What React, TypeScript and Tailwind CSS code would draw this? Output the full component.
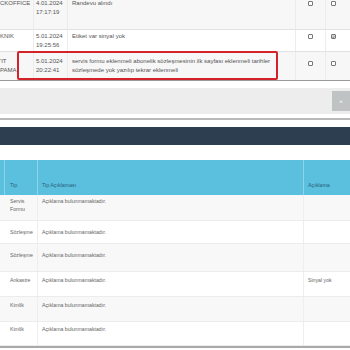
import React from 'react';

type TopRow = { who: string[]; date: string; time: string; note: string[]; a: boolean; b: boolean; bg: string; h: string; pt: string };

const topRows: TopRow[] = [
  { who: ['CKOFFICE'], date: '4.01.2024', time: '17:17:19', note: ['Randevu alındı'], a: false, b: false, bg: 'bg-[#f7f7f7]', h: 'h-[29px]', pt: 'pt-0' },
  { who: ['KNIK'], date: '5.01.2024', time: '19:25:56', note: ['Etiket var sinyal yok'], a: false, b: true, bg: 'bg-white', h: 'h-[22px]', pt: 'pt-[2px]' },
  {
    who: ["'IT", 'PAMA'],
    date: '5.01.2024',
    time: '20:22:41',
    note: [
      'servis formu eklenmeli abonelik sözleşmesinin ilk sayfası eklenmeli tarihler',
      'sözleşmede yok yazılıp tekrar eklenmeli',
    ],
    a: false,
    b: false,
    bg: 'bg-[#f7f7f7]',
    h: 'h-[29px]',
    pt: 'pt-[5px]',
  },
];

const bottomRows = [
  { tip: ['Servis', 'Formu'], desc: 'Açıklama bulunmamaktadır.', note: '', h: 'h-[26px]', pt: 'pt-[2px]' },
  { tip: ['Sözleşme'], desc: 'Açıklama bulunmamaktadır.', note: '', h: 'h-[23px]', pt: 'pt-[7px]' },
  { tip: ['Sözleşme'], desc: 'Açıklama bulunmamaktadır.', note: '', h: 'h-[28px]', pt: 'pt-[7px]' },
  { tip: ['Ankastre'], desc: 'Açıklama bulunmamaktadır.', note: 'Sinyal yok', h: 'h-[25px]', pt: 'pt-[4px]' },
  { tip: ['Kimlik'], desc: 'Açıklama bulunmamaktadır.', note: '', h: 'h-[25px]', pt: 'pt-[4px]' },
  { tip: ['Kimlik'], desc: 'Açıklama bulunmamaktadır.', note: '', h: 'h-[24px]', pt: 'pt-[3px]' },
];

function Box({ checked }: { checked: boolean }) {
  return (
    <div
      className={`w-[5px] h-[5px] rounded-[1px] border border-[#777] flex items-center justify-center ${
        checked ? 'bg-[#d5d5d5]' : 'bg-white'
      }`}
    >
      {checked && (
        <svg width="4" height="4" viewBox="0 0 4 4">
          <path d="M0.6 2 L1.6 3 L3.4 0.8" stroke="#555" strokeWidth="0.8" fill="none" />
        </svg>
      )}
    </div>
  );
}

export default function App() {
  return (
    <div className="w-[350px] h-[350px] overflow-hidden bg-white relative font-['Liberation_Sans',Arial,sans-serif] text-[#555] text-[6px] leading-[9px]">
      {/* Log table */}
      <div className="relative border-b border-[#9a9a9a]">
        {topRows.map((r, i) => (
          <div
            key={i}
            className={`grid grid-cols-[33px_34px_228px_30px_25px] ${r.bg} ${r.h} ${i > 0 ? 'border-t border-[#e2e2e2]' : ''}`}
          >
            <div className={`${r.pt} ${i === 0 ? '-mt-[1px]' : ''} whitespace-nowrap overflow-hidden`}>
              {r.who.map((w) => (
                <div key={w}>{w}</div>
              ))}
            </div>
            <div className={`${r.pt} ${i === 0 ? '-mt-[1px]' : ''} pl-[2px] border-l border-[#ececec]`}>
              <div>{r.date}</div>
              <div>{r.time}</div>
            </div>
            <div className={`${r.pt} ${i === 0 ? '-mt-[1px]' : ''} pl-[4px] border-l border-[#ececec] whitespace-nowrap`}>
              {r.note.map((n) => (
                <div key={n}>{n}</div>
              ))}
            </div>
            <div className={`${i === 0 ? 'pt-[1px]' : 'pt-[4px]'} flex justify-center border-l border-[#ececec]`}>
              <div className={i === 2 ? 'mt-[5px]' : ''}>
                <Box checked={r.a} />
              </div>
            </div>
            <div className={`${i === 0 ? 'pt-[1px]' : 'pt-[4px]'} flex justify-start pl-[5px] border-l border-[#ececec]`}>
              <div className={i === 2 ? 'mt-[5px]' : ''}>
                <Box checked={r.b} />
              </div>
            </div>
          </div>
        ))}
        {/* highlight */}
        <div className="absolute left-[17px] top-[51px] w-[261px] h-[29px] border-2 border-[#d32229] rounded-[2px]" />
      </div>

      {/* pager bar */}
      <div className="mt-[7px] h-[26px] bg-[#ededed] flex items-center justify-end">
        <div className="w-[18px] h-[20px] bg-[#bfc3c4] text-white text-[6px] flex items-center justify-center">«</div>
      </div>
      <div className="mt-[4px] h-[2px] bg-[#b9b9b9]" />

      {/* section header */}
      <div className="mt-[7px] h-[18px] bg-[#2d3e50]" />
      <div className="h-[15px]" />

      {/* type table */}
      <div className="grid grid-cols-[5px_33px_266px_46px] h-[35px] bg-[#5bc0de] text-[#2a5f7a] text-[5.3px]">
        <div className="border-r border-[#8fd3e8]" />
        <div className="border-r border-[#8fd3e8] flex items-end pb-[5px] pl-[5px]">Tip</div>
        <div className="border-r border-[#8fd3e8] flex items-end pb-[5px] pl-[4px]">Tip Açıklaması</div>
        <div className="flex items-end pb-[5px] pl-[4px]">Açıklama</div>
      </div>
      {bottomRows.map((r, i) => (
        <div
          key={i}
          className={`grid grid-cols-[5px_33px_266px_46px] ${r.h} ${i % 2 === 0 ? 'bg-[#f8f8f8]' : 'bg-white'} border-b border-[#ececec] text-[#666] text-[5.2px] leading-[8px]`}
        >
          <div />
          <div className={`${r.pt} pl-[5px] border-r border-[#eeeeee]`}>
            {r.tip.map((t) => (
              <div key={t}>{t}</div>
            ))}
          </div>
          <div className={`${r.pt} pl-[4px] border-r border-[#eeeeee]`}>{r.desc}</div>
          <div className={`${r.pt} pl-[4px]`}>{r.note}</div>
        </div>
      ))}
      <div className="h-[2px] bg-[#a9a9a9]" />
    </div>
  );
}
